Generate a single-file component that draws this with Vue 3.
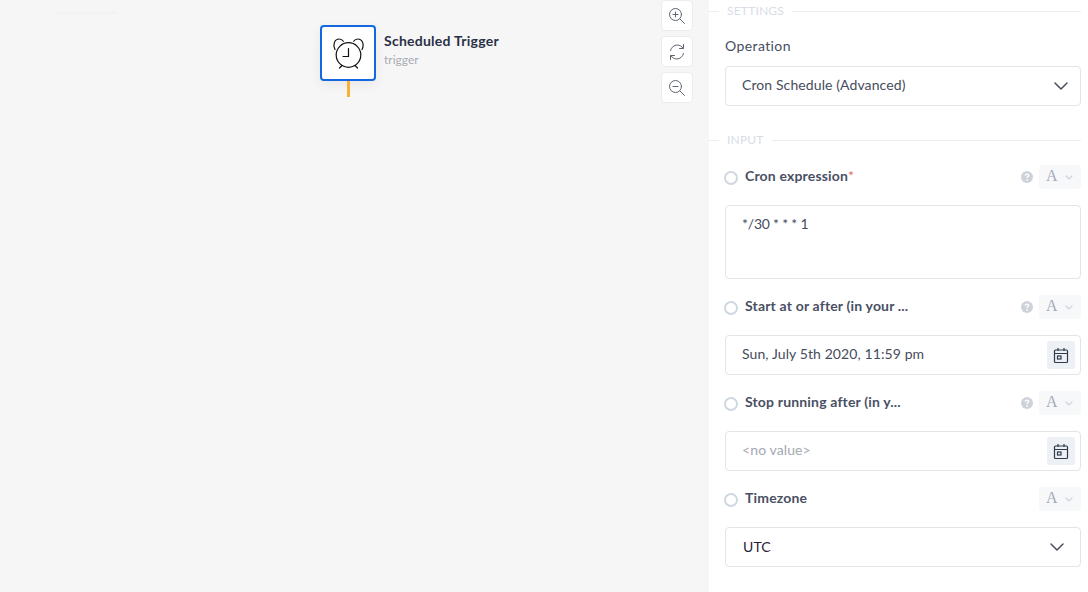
<template>
  <div class="page">
    <div class="canvas">
      <div class="ghost"></div>
      <div class="node">
        <div class="nodeBox">
          <svg width="32" height="32" viewBox="0 0 32 32" fill="none" stroke="#111" stroke-width="1.2" stroke-linecap="round">
            <circle cx="16.500" cy="18" r="12.300" />
            <path d="M16.500 11.500V19.500H11" />
            <path d="M3 12.500C0.500 7.500 2.500 2 7.300 2C9 2 10.300 2.700 11.300 4.300" />
            <path d="M30 12.500C32.500 7.500 30.500 2 25.700 2C24 2 22.700 2.700 21.700 4.300" />
            <path d="M10 28.500L7.500 31M23 28.500L25.500 31" />
          </svg>
        </div>
        <div class="nodeText">
          <div class="nodeTitle">Scheduled Trigger</div>
          <div class="nodeSub">trigger</div>
        </div>
        <div class="nodeLine"></div>
      </div>
      <div class="zoomBar">
        <button class="zoomBtn">
          <svg width="18" height="18" viewBox="0 0 18 18" fill="none" stroke="#5f6570" stroke-width="1" stroke-linecap="round">
            <circle cx="7.500" cy="7.500" r="6" />
            <path d="M12 12L16.500 16.500M7.500 5V10M5 7.500H10" />
          </svg>
        </button>
        <button class="zoomBtn">
          <svg width="18" height="18" viewBox="0 0 18 18" fill="none" stroke="#5f6570" stroke-width="1" stroke-linecap="round" stroke-linejoin="round">
            <path d="M2.500 7.500C3.300 4.300 6 2 9.200 2C11.600 2 13.700 3.200 15 5.200" />
            <path d="M15.500 1.500V5.500H11.500" />
            <path d="M15.500 10.500C14.700 13.700 12 16 8.800 16C6.400 16 4.300 14.800 3 12.800" />
            <path d="M2.500 16.500V12.500H6.500" />
          </svg>
        </button>
        <button class="zoomBtn">
          <svg width="18" height="18" viewBox="0 0 18 18" fill="none" stroke="#5f6570" stroke-width="1" stroke-linecap="round">
            <circle cx="7.500" cy="7.500" r="6" />
            <path d="M12 12L16.500 16.500M5 7.500H10" />
          </svg>
        </button>
      </div>
    </div>

    <div class="panel">
      <div class="sectionHead settingsHead"><span>SETTINGS</span></div>
      <div class="opLabel">Operation</div>
      <div class="field opField">
        <span class="value">Cron Schedule (Advanced)</span>
        <svg class="chev" width="14" height="8" viewBox="0 0 14 8" fill="none" stroke="#4a4f5c" stroke-width="1.500" stroke-linecap="round" stroke-linejoin="round"><path d="M1 1L7 7L13 1" /></svg>
      </div>

      <div class="sectionHead inputHead"><span>INPUT</span></div>

      <template v-for="row in rows" :key="row.label">
        <div class="row">
          <span class="radio"></span>
          <span class="rowLabel">{{ row.label }}<em v-if="row.required">*</em></span>
          <svg v-if="row.help" class="help" width="12" height="12" viewBox="0 0 12 12">
            <circle cx="6" cy="6" r="6" fill="#ced3da" />
            <path d="M4.300 4.700C4.300 3.700 5 3.100 6 3.100C7 3.100 7.700 3.700 7.700 4.500C7.700 5.600 6 5.700 6 7" fill="none" stroke="#fff" stroke-width="1.300" />
            <circle cx="6" cy="8.900" r="0.800" fill="#fff" />
          </svg>
          <div class="typePill">
            <span class="typeA">A</span>
            <svg width="8" height="5" viewBox="0 0 8 5" fill="none" stroke="#ced3da" stroke-width="1.200" stroke-linecap="round"><path d="M1 1L4 4L7 1" /></svg>
          </div>
        </div>

        <div v-if="row.kind === 'area'" class="field area">
          <span class="value">{{ row.value }}</span>
        </div>
        <div v-else-if="row.kind === 'date'" class="field dateField">
          <span class="value" :class="{ empty: row.empty }">{{ row.value }}</span>
          <div class="calBtn">
            <svg width="16" height="17" viewBox="0 0 16 17" fill="none" stroke="#2f3a4c" stroke-width="1.200">
              <rect x="1.500" y="3" width="13" height="12.500" rx="1" />
              <path d="M1.500 6.500H14.500M5 1V4M11 1V4" />
              <rect x="4.500" y="9" width="3.500" height="3" />
            </svg>
          </div>
        </div>
        <div v-else class="field utc">
          <span class="value dark">{{ row.value }}</span>
          <svg class="chev" width="14" height="8" viewBox="0 0 14 8" fill="none" stroke="#4a4f5c" stroke-width="1.500" stroke-linecap="round" stroke-linejoin="round"><path d="M1 1L7 7L13 1" /></svg>
        </div>
      </template>
    </div>
  </div>
</template>

<script setup>
const rows = [
  { label: "Cron expression", required: true, help: true, kind: "area", value: "*/30 * * * 1" },
  { label: "Start at or after (in your ...", help: true, kind: "date", value: "Sun, July 5th 2020, 11:59 pm" },
  { label: "Stop running after (in y...", help: true, kind: "date", value: "<no value>", empty: true },
  { label: "Timezone", kind: "select", value: "UTC" },
];
</script>

<style>
html,
body {
  margin: 0;
  overflow: hidden;
}
</style>

<style scoped>
.page {
  display: flex;
  width: 1088px;
  height: 592px;
  overflow: hidden;
  font-family: "Lato", "Noto Sans", sans-serif;
  font-size: 14px;
  color: #3c4353;
}
.canvas {
  position: relative;
  width: 709px;
  flex-shrink: 0;
  background: #f6f6f6;
}
.ghost {
  position: absolute;
  left: 55px;
  top: 12px;
  width: 62px;
  height: 2px;
  background: #f2f2f2;
}
.node {
  position: absolute;
  left: 320px;
  top: 25px;
}
.nodeBox {
  width: 52px;
  height: 52px;
  display: flex;
  align-items: center;
  justify-content: center;
  background: #fff;
  border: 2px solid #1467e0;
  border-radius: 4px;
  box-shadow: 0 4px 12px rgba(0, 0, 0, 0.06);
}
.nodeText {
  position: absolute;
  left: 64px;
  top: 7px;
  white-space: nowrap;
}
.nodeTitle {
  font-size: 14px;
  font-weight: 700;
  letter-spacing: 0.25px;
  line-height: 18px;
  color: #2a3146;
}
.nodeSub {
  margin-top: 2px;
  font-size: 12px;
  line-height: 16px;
  color: #a9acb5;
}
.nodeLine {
  width: 3px;
  height: 16px;
  margin-left: 27px;
  background: #fbb034;
}
.zoomBar {
  position: absolute;
  left: 661px;
  top: 0;
  display: flex;
  flex-direction: column;
  gap: 5px;
}
.zoomBtn {
  width: 32px;
  height: 31px;
  padding: 0;
  display: flex;
  align-items: center;
  justify-content: center;
  background: #fff;
  border: 1px solid #ececec;
  border-radius: 4px;
}
.panel {
  flex: 1;
  background: #fff;
  padding-right: 7px;
}
.sectionHead {
  display: flex;
  align-items: center;
  height: 22px;
  font-size: 12px;
  line-height: 22px;
  color: #d8dde5;
  letter-spacing: 0.2px;
}
.sectionHead::before {
  content: "";
  width: 10px;
  height: 1px;
  margin-right: 8px;
  background: #eceef1;
}
.sectionHead::after {
  content: "";
  flex: 1;
  height: 1px;
  margin-left: 8px;
  background: #eceef1;
}
.settingsHead {
  margin-bottom: 13px;
}
.inputHead {
  margin-top: 23px;
  margin-bottom: 14px;
}
.opLabel {
  margin-left: 16px;
  height: 22px;
  line-height: 22px;
  margin-bottom: 9px;
  letter-spacing: 0.4px;
  color: #464d60;
}
.field {
  display: flex;
  align-items: center;
  justify-content: space-between;
  box-sizing: border-box;
  height: 40px;
  margin-left: 16px;
  padding: 0 14px 0 16px;
  background: #fff;
  border: 1px solid #e3e4e8;
  border-radius: 4px;
}
.opField {
  padding-right: 12px;
}
.value {
  margin-top: -4px;
  letter-spacing: 0.1px;
  color: #464c5c;
}
.value.empty {
  color: #a4a8b2;
}
.value.dark {
  margin-top: -2px;
  color: #1f2535;
}
.area {
  height: 74px;
  align-items: flex-start;
  padding-top: 9px;
}
.area .value {
  margin-top: 0;
  letter-spacing: -0.2px;
}
.dateField {
  padding-right: 5px;
}
.utc {
  padding: 0 16px 0 17px;
}
.calBtn {
  width: 28px;
  height: 28px;
  display: flex;
  align-items: center;
  justify-content: center;
  background: #edf0f4;
  border-radius: 3px;
}
.row {
  display: flex;
  align-items: center;
  height: 24px;
  margin: 16px 0 16px 15px;
}
.inputHead + .row {
  margin-top: 0;
}
.radio {
  box-sizing: border-box;
  width: 14px;
  height: 14px;
  margin-top: 2px;
  margin-right: 7px;
  border: 2px solid #d0d7e0;
  border-radius: 50%;
}
.rowLabel {
  flex: 1;
  font-weight: 700;
  letter-spacing: 0.17px;
  color: #4a5064;
  margin-top: -4px;
}
.rowLabel em {
  font-style: normal;
  font-weight: 400;
  color: #e06a6a;
}
.help {
  margin-right: 6px;
}
.typePill {
  display: flex;
  align-items: center;
  gap: 7px;
  box-sizing: border-box;
  width: 42px;
  height: 24px;
  padding-left: 7px;
  background: #f7f8fa;
  border-radius: 3px;
}
.typeA {
  margin-top: -2px;
  font-family: "Liberation Serif", serif;
  font-size: 16px;
  color: #a3acb9;
}
</style>
